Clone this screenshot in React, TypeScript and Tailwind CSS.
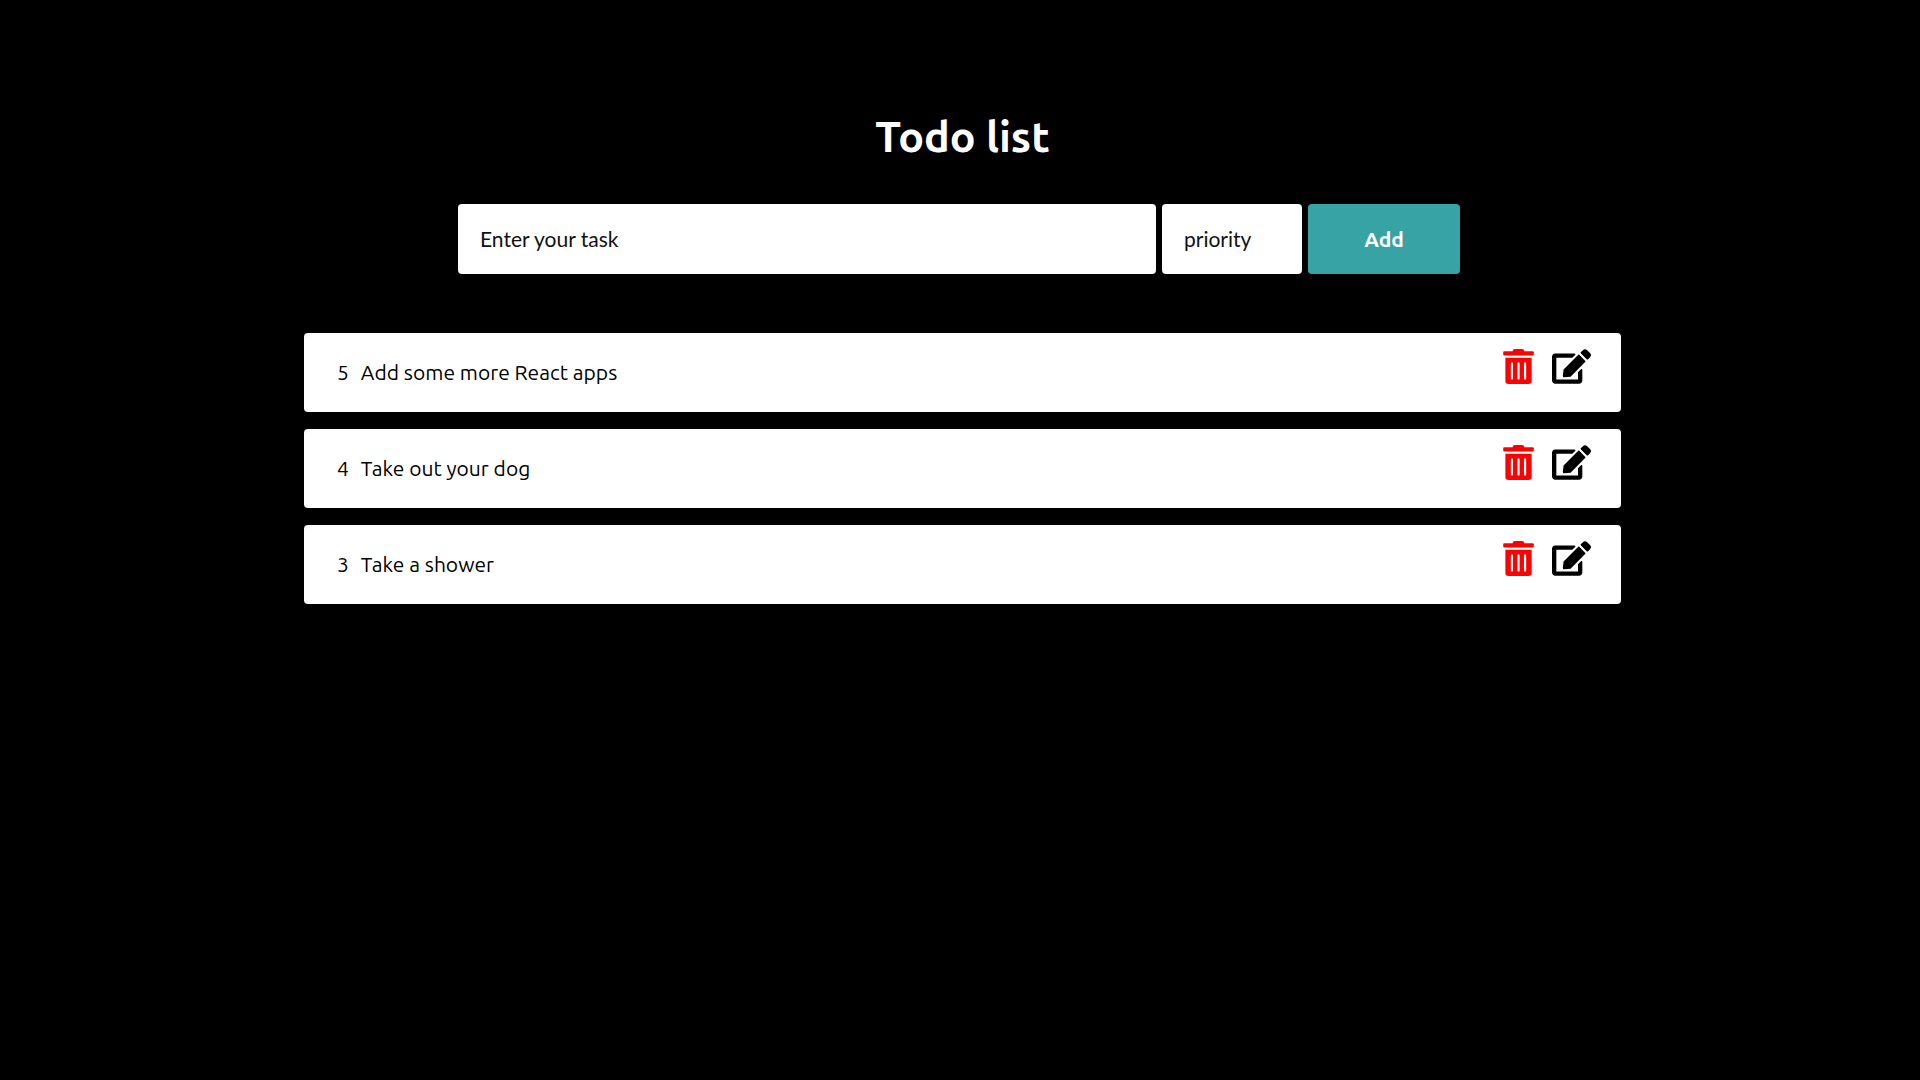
import { FaEdit, FaTrashAlt } from "react-icons/fa";

type Task = { priority: number; title: string };

const tasks: Task[] = [
  { priority: 5, title: "Add some more React apps" },
  { priority: 4, title: "Take out your dog" },
  { priority: 3, title: "Take a shower" },
];

function TaskForm() {
  const field =
    "h-[70px] min-w-0 rounded bg-white px-[22px] pb-[2px] font-['Lato',sans-serif] text-[21px] text-black outline-none placeholder:text-[#111] placeholder:opacity-100";
  return (
    <form
      className="mx-auto flex w-full max-w-[1002px] gap-[6px]"
      onSubmit={(event) => event.preventDefault()}
    >
      <input type="text" aria-label="Enter your task" placeholder="Enter your task" className={`${field} flex-1`} />
      <input type="text" aria-label="priority" placeholder="priority" className={`${field} w-[140px]`} />
      <button type="submit" className="h-[70px] w-[152px] rounded bg-[#38a3a5] pt-px text-[21px] font-bold text-white">
        Add
      </button>
    </form>
  );
}

function TaskRow({ task }: { task: Task }) {
  return (
    <li className="flex h-[79px] justify-between rounded bg-white pr-[30px] pl-[33px] text-black">
      <div className="flex items-center gap-3 text-[21px]">
        <span>{task.priority}</span>
        <span>{task.title}</span>
      </div>
      <div className="flex items-start gap-[18px] pt-4">
        <button type="button" aria-label={`Delete ${task.title}`} className="text-[#ff0000]">
          <FaTrashAlt className="h-[35px] w-[31px]" />
        </button>
        <button type="button" aria-label={`Edit ${task.title}`}>
          <FaEdit className="h-[35px] w-[39px]" />
        </button>
      </div>
    </li>
  );
}

export default function App() {
  return (
    <main className="min-h-screen bg-black pt-[106px] pl-[5px] font-['Ubuntu','Noto_Sans',sans-serif]">
      <h1 className="text-center text-[43px] leading-[60px] font-bold text-white">Todo list</h1>
      <div className="mt-[38px] pr-[7px]">
        <TaskForm />
      </div>
      <ul className="mx-auto mt-[59px] flex w-full max-w-[1317px] flex-col gap-[17px]">
        {tasks.map((task) => (
          <TaskRow key={task.title} task={task} />
        ))}
      </ul>
    </main>
  );
}
